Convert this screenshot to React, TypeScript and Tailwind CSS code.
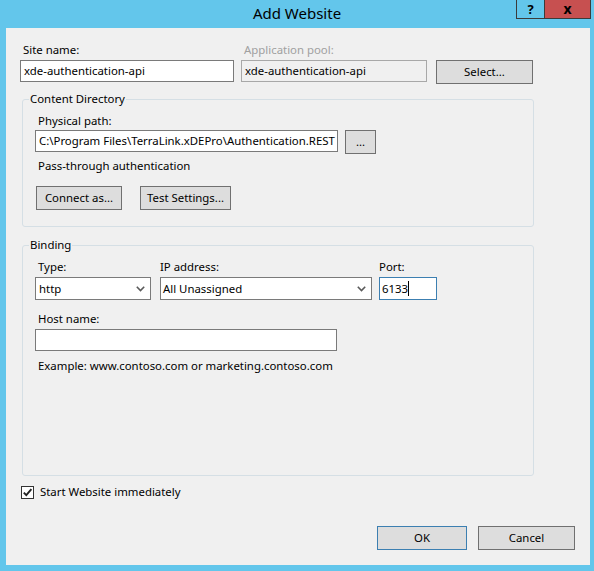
import React from 'react';

// Windows 8 style "Add Website" dialog (IIS Manager)

const TextBox = ({
  value,
  width,
  disabled,
  focused,
}: {
  value?: string;
  width: string;
  disabled?: boolean;
  focused?: boolean;
}) => (
  <div
    className={
      'h-[22px] border flex items-center whitespace-nowrap overflow-hidden ' +
      width +
      (disabled
        ? ' bg-[#f0f0f0] border-[#a8a8a8] pl-[3px]'
        : focused
        ? ' bg-white border-[#3c7fb1] pl-[2px]'
        : ' bg-white border-[#7a7a7a] pl-[3px]')
    }
  >
    {value}
    {focused && <span className="w-px h-[15px] bg-black"></span>}
  </div>
);

const Combo = ({ value, width, textPad }: { value: string; width: string; textPad: string }) => (
  <div className={'h-[23px] border border-[#7a7a7a] bg-white flex items-center justify-between pr-[5px] ' + width + ' ' + textPad}>
    <span className="whitespace-nowrap">{value}</span>
    <svg width="9" height="6" viewBox="0 0 9 6" fill="none">
      <polyline points="0.8,0.8 4.5,4.5 8.2,0.8" stroke="#5a5a5a" strokeWidth="1.6" />
    </svg>
  </div>
);

const Button = ({
  children,
  width,
  isDefault,
  className = '',
}: {
  children: React.ReactNode;
  width: string;
  isDefault?: boolean;
  className?: string;
}) => (
  <button
    className={
      'h-[24px] border bg-[#dddddd] flex items-center justify-center leading-[16px] ' +
      width +
      (isDefault ? ' border-[#3c7fb1]' : ' border-[#707070]') +
      ' ' +
      className
    }
  >
    {children}
  </button>
);

const Label = ({ children, className = '' }: { children: React.ReactNode; className?: string }) => (
  <div className={'leading-[16px] whitespace-nowrap ' + className}>{children}</div>
);

export default function App() {
  return (
    <div className="w-[594px] h-[571px] bg-[#63c6eb] flex flex-col font-['Noto_Sans','Open_Sans',sans-serif] text-[11.4px] text-black select-none">
      {/* title bar */}
      <div className="relative h-[28px] shrink-0 flex items-center justify-center">
        <span className="text-[15px] leading-[20px] mt-[-2px]">Add Website</span>
        <div className="absolute top-0 right-[3px] flex h-[19px]">
          <div className="w-[29px] border border-t-0 border-[#3b3b3b] flex items-center justify-center font-bold text-[13px] leading-[16px]">
            ?
          </div>
          <div className="w-[46px] border border-t-0 border-l-0 border-[#3b3b3b] bg-[#c75050] flex items-center justify-center font-bold text-[14px] leading-[16px]">
            x
          </div>
        </div>
      </div>

      {/* client area */}
      <div className="ml-[6px] mr-[4px] h-[537px] shrink-0 bg-[#f0f0f0] flex flex-col px-[14px] pt-[14px]">
        {/* site name / app pool */}
        <div className="flex items-start">
          <div className="w-[214px] flex flex-col">
            <Label className="pl-[3px] mb-[2px]">Site name:</Label>
            <TextBox value="xde-authentication-api" width="w-[214px]" />
          </div>
          <div className="w-[186px] ml-[7px] flex flex-col">
            <Label className="pl-[3px] mb-[2px] text-[#a0a0a0]">Application pool:</Label>
            <TextBox value="xde-authentication-api" width="w-[186px]" disabled />
          </div>
          <div className="ml-[9px] pt-[18px]">
            <Button width="w-[97px]">Select...</Button>
          </div>
        </div>

        {/* content directory */}
        <fieldset className="ml-[2px] w-[512px] mt-[7px] border border-[#d5dfe5] rounded-[3px] px-[12px] pt-[6px] pb-[16px]">
          <legend className="ml-[-6px] px-px leading-[16px]">Content Directory</legend>
          <Label className="pl-[3px] mb-[1px]">Physical path:</Label>
          <div className="flex items-start">
            <TextBox value="C:\Program Files\TerraLink.xDEPro\Authentication.REST" width="w-[303px]" />
            <Button width="w-[31px]" className="ml-[7px]">
              ...
            </Button>
          </div>
          <Label className="pl-[3px] mt-[4px]">Pass-through authentication</Label>
          <div className="flex mt-[12px]">
            <Button width="w-[86px]" className="ml-[1px]">
              Connect as...
            </Button>
            <Button width="w-[91px]" className="ml-[18px]">
              Test Settings...
            </Button>
          </div>
        </fieldset>

        {/* binding */}
        <fieldset className="ml-[2px] w-[512px] h-[239px] mt-[10px] border border-[#d5dfe5] rounded-[3px] px-[12px] pt-[6px]">
          <legend className="ml-[-6px] px-px leading-[16px]">Binding</legend>
          <div className="flex items-start">
            <div className="flex flex-col">
              <Label className="pl-[3px] mb-[2px]">Type:</Label>
              <Combo value="http" width="w-[116px]" textPad="pl-[3px]" />
            </div>
            <div className="flex flex-col ml-[9px]">
              <Label className="mb-[2px]">IP address:</Label>
              <Combo value="All Unassigned" width="w-[212px]" textPad="pl-[2px]" />
            </div>
            <div className="flex flex-col ml-[7px]">
              <Label className="mb-[2px]">Port:</Label>
              <div className="h-[23px] w-[58px] border border-[#3c7fb1] bg-white flex items-center pl-[2px]">
                6133
                <span className="w-px h-[15px] bg-black"></span>
              </div>
            </div>
          </div>
          <Label className="pl-[3px] mt-[11px] mb-[2px]">Host name:</Label>
          <TextBox width="w-[302px]" />
          <Label className="pl-[3px] mt-[7px]">Example: www.contoso.com or marketing.contoso.com</Label>
        </fieldset>

        {/* start immediately */}
        <div className="flex items-center mt-[8px] h-[16px]">
          <div className="ml-[1px] w-[13px] h-[13px] border border-[#333333] bg-white flex items-center justify-center">
            <svg width="11" height="11" viewBox="0 0 11 11" fill="none">
              <path d="M1.8 5.6 L4.3 8.2 L9.4 2.2" stroke="#222222" strokeWidth="1.9" />
            </svg>
          </div>
          <Label className="ml-[6px]">Start Website immediately</Label>
        </div>

        {/* dialog buttons */}
        <div className="flex justify-end mt-[26px] pr-[1px]">
          <Button width="w-[90px]" isDefault>
            OK
          </Button>
          <Button width="w-[97px]" className="ml-[11px]">
            Cancel
          </Button>
        </div>
      </div>
    </div>
  );
}
